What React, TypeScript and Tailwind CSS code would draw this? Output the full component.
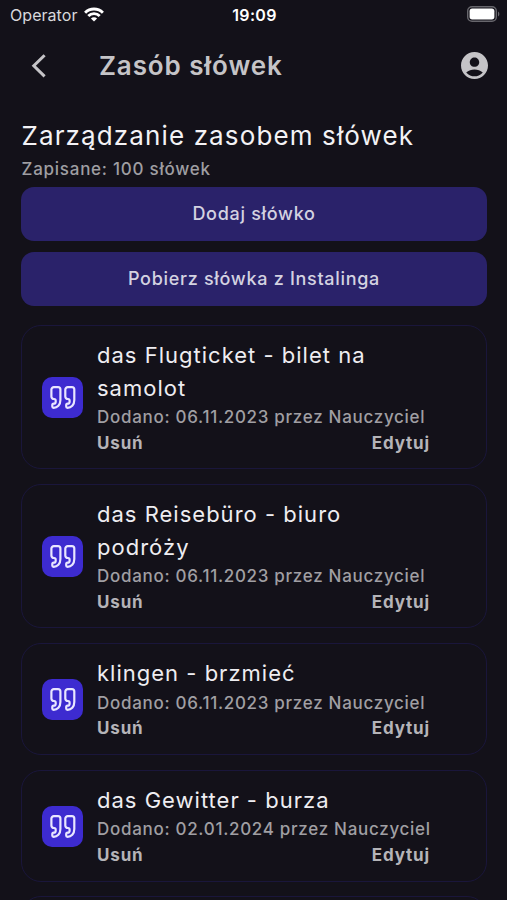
interface Word {
  title: string;
  added: string;
}

const words: Word[] = [
  { title: 'das Flugticket - bilet na samolot', added: '06.11.2023' },
  { title: 'das Reisebüro - biuro podróży', added: '06.11.2023' },
  { title: 'klingen - brzmieć', added: '06.11.2023' },
  { title: 'das Gewitter - burza', added: '02.01.2024' },
];

const quoteMark =
  'M4 1.2h4a2.4 2.4 0 0 1 2.4 2.4V14c0 4.8-3.1 7.8-6.8 7.8a1.3 1.3 0 0 1-1.3-1.3v-1.4c0-.8.6-1.4 1.4-1.4 1.1 0 2-.9 2-2v-1c0-1-.6-1.7-1.6-1.7a2.5 2.5 0 0 1-2.7-2.5V3.6A2.4 2.4 0 0 1 4 1.2z';

function QuoteIcon() {
  return (
    <svg width="26" height="23" viewBox="0 0 26 23" fill="none" stroke="currentColor" strokeWidth="2.2" strokeLinejoin="round">
      <path d={quoteMark} />
      <path d={quoteMark} transform="translate(13.9 0)" />
    </svg>
  );
}

function StatusBar() {
  return (
    <div className="grid h-[29px] shrink-0 grid-cols-3 items-center pr-2 pl-2.5 text-white">
      <div className="flex items-center gap-[7px]">
        <span className="text-base tracking-[0.05px] text-[#d8d8dc]">Operator</span>
        <svg width="20" height="15" viewBox="0 0 20 15" fill="none" stroke="currentColor" strokeWidth="2.9">
          <path d="M1.1 5.7a12.6 12.6 0 0 1 17.8 0" />
          <path d="M4.3 9a8 8 0 0 1 11.4 0" />
          <path d="M10 14.6 6.9 11.5a4.4 4.4 0 0 1 6.2 0z" fill="currentColor" stroke="none" />
        </svg>
      </div>
      <span className="text-center text-base font-semibold tracking-[0.3px]">19:09</span>
      <svg className="-mr-px mb-px justify-self-end" width="33" height="16" viewBox="0 0 33 16" fill="none">
        <rect x="0.7" y="0.7" width="28.6" height="14.6" rx="4.3" stroke="#67666c" strokeWidth="1.4" />
        <rect x="2.6" y="2.6" width="24.8" height="10.8" rx="2.6" fill="#fff" />
        <path d="M31 5.5c1.8.7 1.8 4.3 0 5z" fill="#67666c" />
      </svg>
    </div>
  );
}

function Header() {
  return (
    <header className="flex h-[73px] shrink-0 items-center pr-[19px] pl-[31px] text-[#c5c4c7]">
      <button aria-label="Wstecz">
        <svg width="16" height="24" viewBox="0 0 16 24" fill="none" stroke="currentColor" strokeWidth="3">
          <path d="M13.6 1.2 2.8 11.8 13.6 22.4" />
        </svg>
      </button>
      <h1 className="ml-[52px] flex-1 text-[26px] font-semibold tracking-[0.9px]">Zasób słówek</h1>
      <button aria-label="Profil">
        <svg width="27" height="27" viewBox="2 2 20 20" fill="currentColor">
          <path d="M12 2C6.48 2 2 6.48 2 12s4.48 10 10 10 10-4.48 10-10S17.52 2 12 2zm0 4c1.93 0 3.5 1.57 3.5 3.5S13.93 13 12 13s-3.5-1.57-3.5-3.5S10.07 6 12 6zm0 14c-2.03 0-4.43-.82-6.14-2.88C7.55 15.8 9.68 15 12 15s4.45.8 6.14 2.12C16.43 19.18 14.03 20 12 20z" />
        </svg>
      </button>
    </header>
  );
}

function ActionButton({ label }: { label: string }) {
  return (
    <button className="h-[54px] w-full rounded-[13px] bg-[#2a226a] pb-px text-lg font-medium tracking-[0.7px] text-[#d4d2e1]">
      {label}
    </button>
  );
}

function WordCard({ word }: { word: Word }) {
  return (
    <li className="flex items-center rounded-[20px] border border-[#1a163b] pt-[13.6px] pb-3 pr-14 pl-5">
      <div className="flex size-[41px] shrink-0 items-center justify-center rounded-[10px] bg-[#3d2bd0] text-[#e9e6ff]">
        <QuoteIcon />
      </div>
      <div className="ml-3.5 min-w-0 flex-1">
        <h3 className="mb-[0.8px] text-[22px] leading-[32.4px] tracking-[1.01px] text-[#eeedf1]">{word.title}</h3>
        <p className="text-[17px] leading-[25.8px] font-medium tracking-[0.7px] whitespace-nowrap text-[#a09fa3]">
          Dodano: {word.added} przez Nauczyciel
        </p>
        <div className="flex justify-between text-[17px] leading-[25.8px] font-bold tracking-[0.85px] text-[#b5b4b8]">
          <button>Usuń</button>
          <button>Edytuj</button>
        </div>
      </div>
    </li>
  );
}

export default function App() {
  return (
    <div className="flex h-[900px] w-[507px] flex-col overflow-hidden bg-[#131119] font-['Inter','Liberation_Sans',sans-serif] [font-optical-sizing:none]">
      <StatusBar />
      <Header />
      <main className="pt-[15px] pr-5 pl-[21px]">
        <h2 className="pl-[0.5px] text-[26px] leading-[38px] tracking-[1.12px] whitespace-nowrap text-[#f3f2f5]">
          Zarządzanie zasobem słówek
        </h2>
        <p className="pt-px pl-[0.5px] text-[17px] leading-[27px] font-medium tracking-[0.75px] text-[#9f9ea2]">
          Zapisane: 100 słówek
        </p>
        <div className="mt-1 flex flex-col gap-[11px]">
          <ActionButton label="Dodaj słówko" />
          <ActionButton label="Pobierz słówka z Instalinga" />
        </div>
        <ul className="mt-[18.5px] flex flex-col gap-[14.4px]">
          {words.map((word) => (
            <WordCard key={word.title} word={word} />
          ))}
          <li className="h-28 rounded-[20px] border border-[#1a163b]" />
        </ul>
      </main>
    </div>
  );
}
